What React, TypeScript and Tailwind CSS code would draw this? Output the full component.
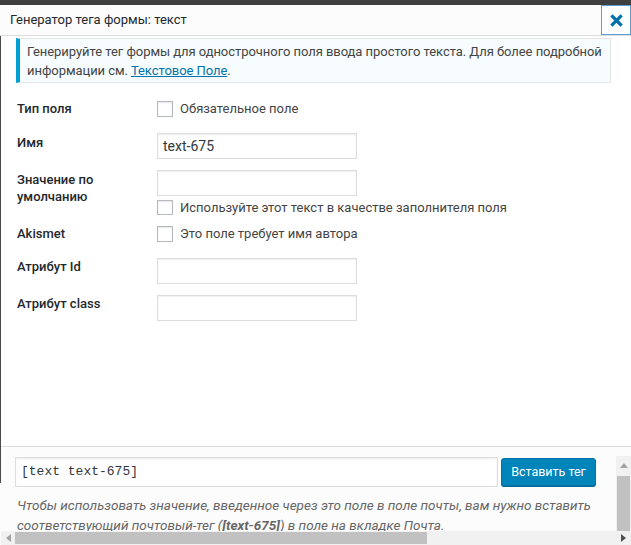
import React from "react";

function Checkbox({ h = 16 }: { h?: number }) {
  return (
    <span
      className={`inline-block w-[16px] ${h === 16 ? "h-[16px]" : "h-[15px]"} border border-[#b4b9be] bg-white shadow-[inset_0_1px_2px_rgba(0,0,0,0.1)] shrink-0`}
    />
  );
}

function TextInput({ value = "" }: { value?: string }) {
  return (
    <div className="w-[200px] h-[26px] border border-[#ddd] bg-white shadow-[inset_0_1px_2px_rgba(0,0,0,0.07)] flex items-center pl-[5px] text-[14px] font-normal text-[#32373c]">
      {value}
    </div>
  );
}

export default function App() {
  return (
    <div className="w-[631px] h-[545px] overflow-hidden bg-[#444] flex flex-col font-['Roboto',sans-serif] text-[13px] text-[#444]">
      <div className="h-[5px] shrink-0 bg-[#3f3f3f]" />
      <div className="h-[31px] shrink-0 bg-[#fcfcfc] border-b border-[#ddd] flex items-stretch justify-between">
        <div className="pl-[10px] flex items-center text-[13px] text-[#23282d]">Генератор тега формы: текст</div>
        <div className="w-[30px] border border-[#5b9dd9] bg-white flex items-center justify-center">
          <svg width="13" height="13" viewBox="0 0 13 13">
            <path d="M2.5 2.5 L10.5 10.5 M10.5 2.5 L2.5 10.5" stroke="#0073aa" strokeWidth="3.2" strokeLinecap="square" />
          </svg>
        </div>
      </div>
      <div className="flex-1 flex min-h-0">
        <div className="w-px flex flex-col shrink-0">
          <div className="h-[447px] bg-[#4a4a4a]" />
          <div className="flex-1 bg-[#fcfcfc]" />
        </div>
        <div className="flex-1 flex flex-col bg-white min-w-0">
          <div className="h-[410px] shrink-0 pt-[2px]">
            <div className="ml-[15px] mr-[20px] h-[45px] border border-[#e5e5e5] border-l-[4px] border-l-[#00a0d2] bg-[#f7fcfe] pl-[7px] pt-[3px] text-[13px] leading-[19px] text-[#444] whitespace-nowrap tracking-[-0.05px]">
              Генерируйте тег формы для однострочного поля ввода простого текста. Для более подробной
              <br />
              информации см. <span className="text-[#0073aa] underline">Текстовое Поле</span>.
            </div>
            <div className="pl-[16px] font-medium text-[#23282d]">
              <div className="flex mt-[18px] h-[16px]">
                <div className="w-[140px] leading-[15px]">Тип поля</div>
                <div className="flex items-center gap-[7px] font-normal text-[#444] leading-[16px]">
                  <Checkbox />
                  <span>Обязательное поле</span>
                </div>
              </div>
              <div className="flex mt-[16px]">
                <div className="w-[140px] leading-[17px] pt-[1px]">Имя</div>
                <TextInput value="text-675" />
              </div>
              <div className="flex mt-[11px]">
                <div className="w-[140px] leading-[17px] pt-[1px]">
                  Значение по
                  <br />
                  умолчанию
                </div>
                <div className="flex flex-col font-normal text-[#444]">
                  <TextInput />
                  <div className="flex items-center gap-[7px] mt-[4px] h-[15px] leading-[15px]">
                    <Checkbox h={15} />
                    <span>Используйте этот текст в качестве заполнителя поля</span>
                  </div>
                </div>
              </div>
              <div className="flex mt-[11px] h-[16px]">
                <div className="w-[140px] leading-[15px]">Akismet</div>
                <div className="flex items-center gap-[7px] font-normal text-[#444] leading-[16px]">
                  <Checkbox />
                  <span>Это поле требует имя автора</span>
                </div>
              </div>
              <div className="flex mt-[16px]">
                <div className="w-[140px] leading-[17px]">Атрибут Id</div>
                <TextInput />
              </div>
              <div className="flex mt-[11px]">
                <div className="w-[140px] leading-[17px]">Атрибут class</div>
                <TextInput />
              </div>
            </div>
          </div>
          <div className="flex-1 border-t border-[#ddd] bg-[#fcfcfc] pt-[9px] flex flex-col min-h-0">
            <div className="flex-1 flex min-h-0">
              <div className="flex-1 overflow-hidden pl-[14px] pt-[1px]">
                <div className="flex items-center">
                  <div className="w-[483px] h-[30px] border border-[#ddd] bg-white shadow-[inset_0_1px_2px_rgba(0,0,0,0.07)] flex items-center pl-[5px] font-['Liberation_Mono',monospace] text-[13px] text-[#32373c]">
                    [text text-675]
                  </div>
                  <div className="ml-[3px] w-[95px] h-[28px] rounded-[3px] bg-[#0085ba] border border-[#0073aa] shadow-[0_1px_0_#006799] text-white flex items-center justify-center text-[12.5px]">
                    Вставить тег
                  </div>
                </div>
                <div className="mt-[8px] pl-[2px] italic text-[#666] text-[13.5px] leading-[20px] whitespace-nowrap">
                  Чтобы использовать значение, введенное через это поле в поле почты, вам нужно вставить
                  <br />
                  соответствующий почтовый-тег (<b className="font-bold">[text-675]</b>) в поле на вкладке Почта.
                </div>
              </div>
              <div className="w-[15px] shrink-0 flex flex-col bg-[#f1f1f1]">
                <div className="h-[18px] flex items-center justify-center">
                  <svg width="8" height="5" viewBox="0 0 8 5">
                    <path d="M4 0 L8 5 L0 5 Z" fill="#a3a3a3" />
                  </svg>
                </div>
                <div className="flex-1 mx-[1px] mt-[2px] bg-[#c1c1c1]" />
              </div>
            </div>
            <div className="h-[14px] shrink-0 bg-[#f1f1f1] flex items-center">
              <div className="w-[14px] flex items-center justify-center">
                <svg width="5" height="8" viewBox="0 0 5 8">
                  <path d="M0 4 L5 0 L5 8 Z" fill="#a3a3a3" />
                </svg>
              </div>
              <div className="w-[412px] h-[12px] bg-[#c1c1c1]" />
              <div className="flex-1" />
              <div className="w-[15px] flex items-center justify-center">
                <svg width="5" height="8" viewBox="0 0 5 8">
                  <path d="M5 4 L0 0 L0 8 Z" fill="#505050" />
                </svg>
              </div>
            </div>
          </div>
        </div>
      </div>
    </div>
  );
}
